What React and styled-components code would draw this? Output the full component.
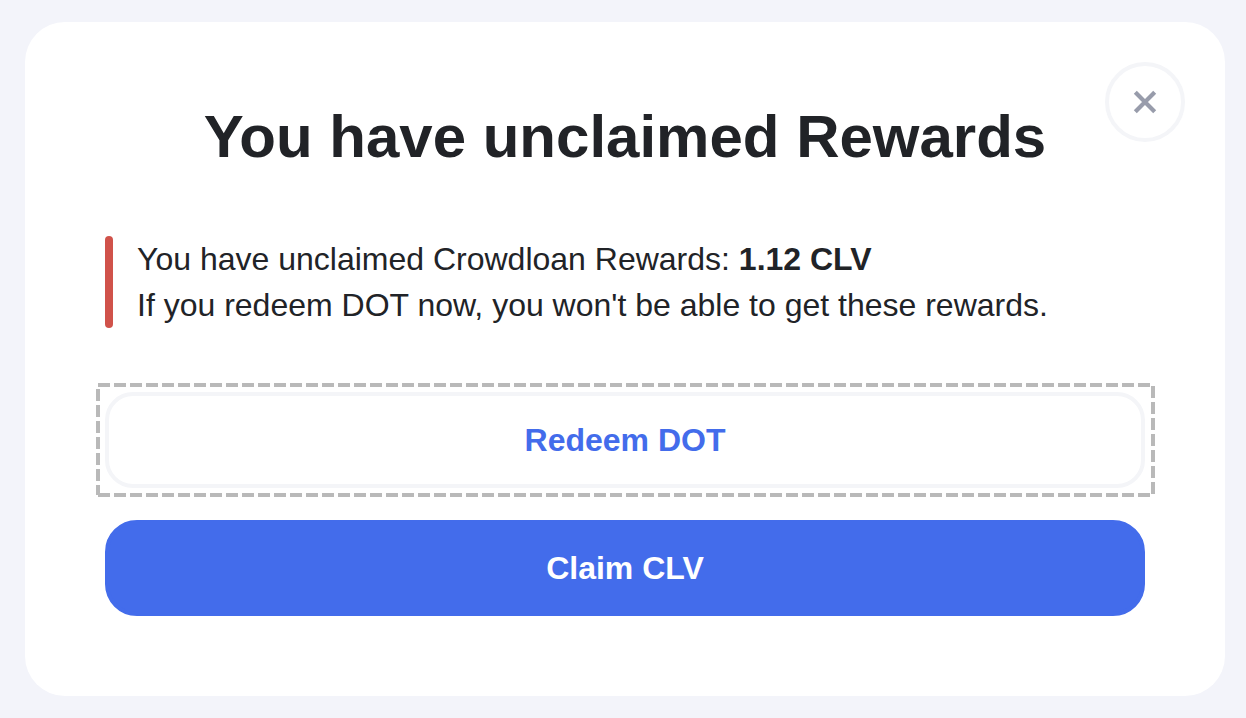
import React from "react";
import styled, { createGlobalStyle } from "styled-components";

const GlobalStyle = createGlobalStyle`
  *, *::before, *::after { box-sizing: border-box; }
  body {
    margin: 0;
    background: #f3f4fa;
    color: #212327;
    font-family: "Liberation Sans", Arial, sans-serif;
  }
`;

const Page = styled.main`
  min-height: 100vh;
  padding: 22px 21px 22px 25px;
`;

const Dialog = styled.section`
  position: relative;
  padding: 80px;
  border-radius: 40px;
  background: #ffffff;
`;

const CloseButton = styled.button`
  position: absolute;
  top: 40px;
  right: 40px;
  display: grid;
  place-items: center;
  width: 80px;
  height: 80px;
  padding: 0;
  border: 4px solid #f4f5f8;
  border-radius: 50%;
  background: #ffffff;
  color: #989cab;
  cursor: pointer;
`;

const Title = styled.h1`
  margin: 0 0 64px;
  font-size: 60px;
  line-height: 70px;
  font-weight: 700;
  text-align: center;
`;

const Notice = styled.p`
  display: flex;
  gap: 24px;
  margin: 0 0 64px;
  font-size: 32px;
  line-height: 46px;

  &::before {
    content: "";
    flex: none;
    width: 8px;
    border-radius: 4px;
    background: #d0524a;
  }
`;

const Actions = styled.div`
  display: grid;
  gap: 32px;
`;

const ActionButton = styled.button`
  display: block;
  width: 100%;
  height: 96px;
  padding: 0;
  border: 4px solid ${({ $primary }) => ($primary ? "#436ceb" : "#f4f5f8")};
  border-radius: ${({ $primary }) => ($primary ? "32px" : "28px")};
  background: ${({ $primary }) => ($primary ? "#436ceb" : "#ffffff")};
  color: ${({ $primary }) => ($primary ? "#ffffff" : "#436ceb")};
  font: 700 32px/40px "Liberation Sans", Arial, sans-serif;
  cursor: pointer;
`;

const FocusFrame = styled.div`
  position: relative;
`;

const FocusOutline = styled.svg`
  position: absolute;
  top: -7px;
  left: -7px;
  width: calc(100% + 15px);
  height: calc(100% + 14px);
  overflow: visible;
  pointer-events: none;
  stroke: #b9b9b9;
  stroke-width: 4px;
  stroke-dasharray: 12 4;
`;

export default function App() {
  return (
    <>
      <GlobalStyle />
      <Page>
        <Dialog role="dialog" aria-labelledby="dialog-title">
          <CloseButton type="button" aria-label="Close">
            <svg width="24" height="24" viewBox="0 0 24 24" fill="none" stroke="currentColor" strokeWidth="4.2" aria-hidden="true">
              <path d="M2.3 2.3L21.7 21.7M21.7 2.3L2.3 21.7" />
            </svg>
          </CloseButton>
          <Title id="dialog-title">You have unclaimed Rewards</Title>
          <Notice>
            <span>
              You have unclaimed Crowdloan Rewards: <strong>1.12 CLV</strong>
              <br />
              If you redeem DOT now, you won't be able to get these rewards.
            </span>
          </Notice>
          <Actions>
            <FocusFrame>
              <ActionButton type="button">Redeem DOT</ActionButton>
              <FocusOutline aria-hidden="true">
                <line x1="0" y1="0" x2="100%" y2="0" />
                <line x1="0" y1="100%" x2="100%" y2="100%" />
                <line x1="0" y1="0" x2="0" y2="100%" strokeDashoffset="-4" />
                <line x1="100%" y1="0" x2="100%" y2="100%" strokeDashoffset="-1" />
              </FocusOutline>
            </FocusFrame>
            <ActionButton type="button" $primary>Claim CLV</ActionButton>
          </Actions>
        </Dialog>
      </Page>
    </>
  );
}
